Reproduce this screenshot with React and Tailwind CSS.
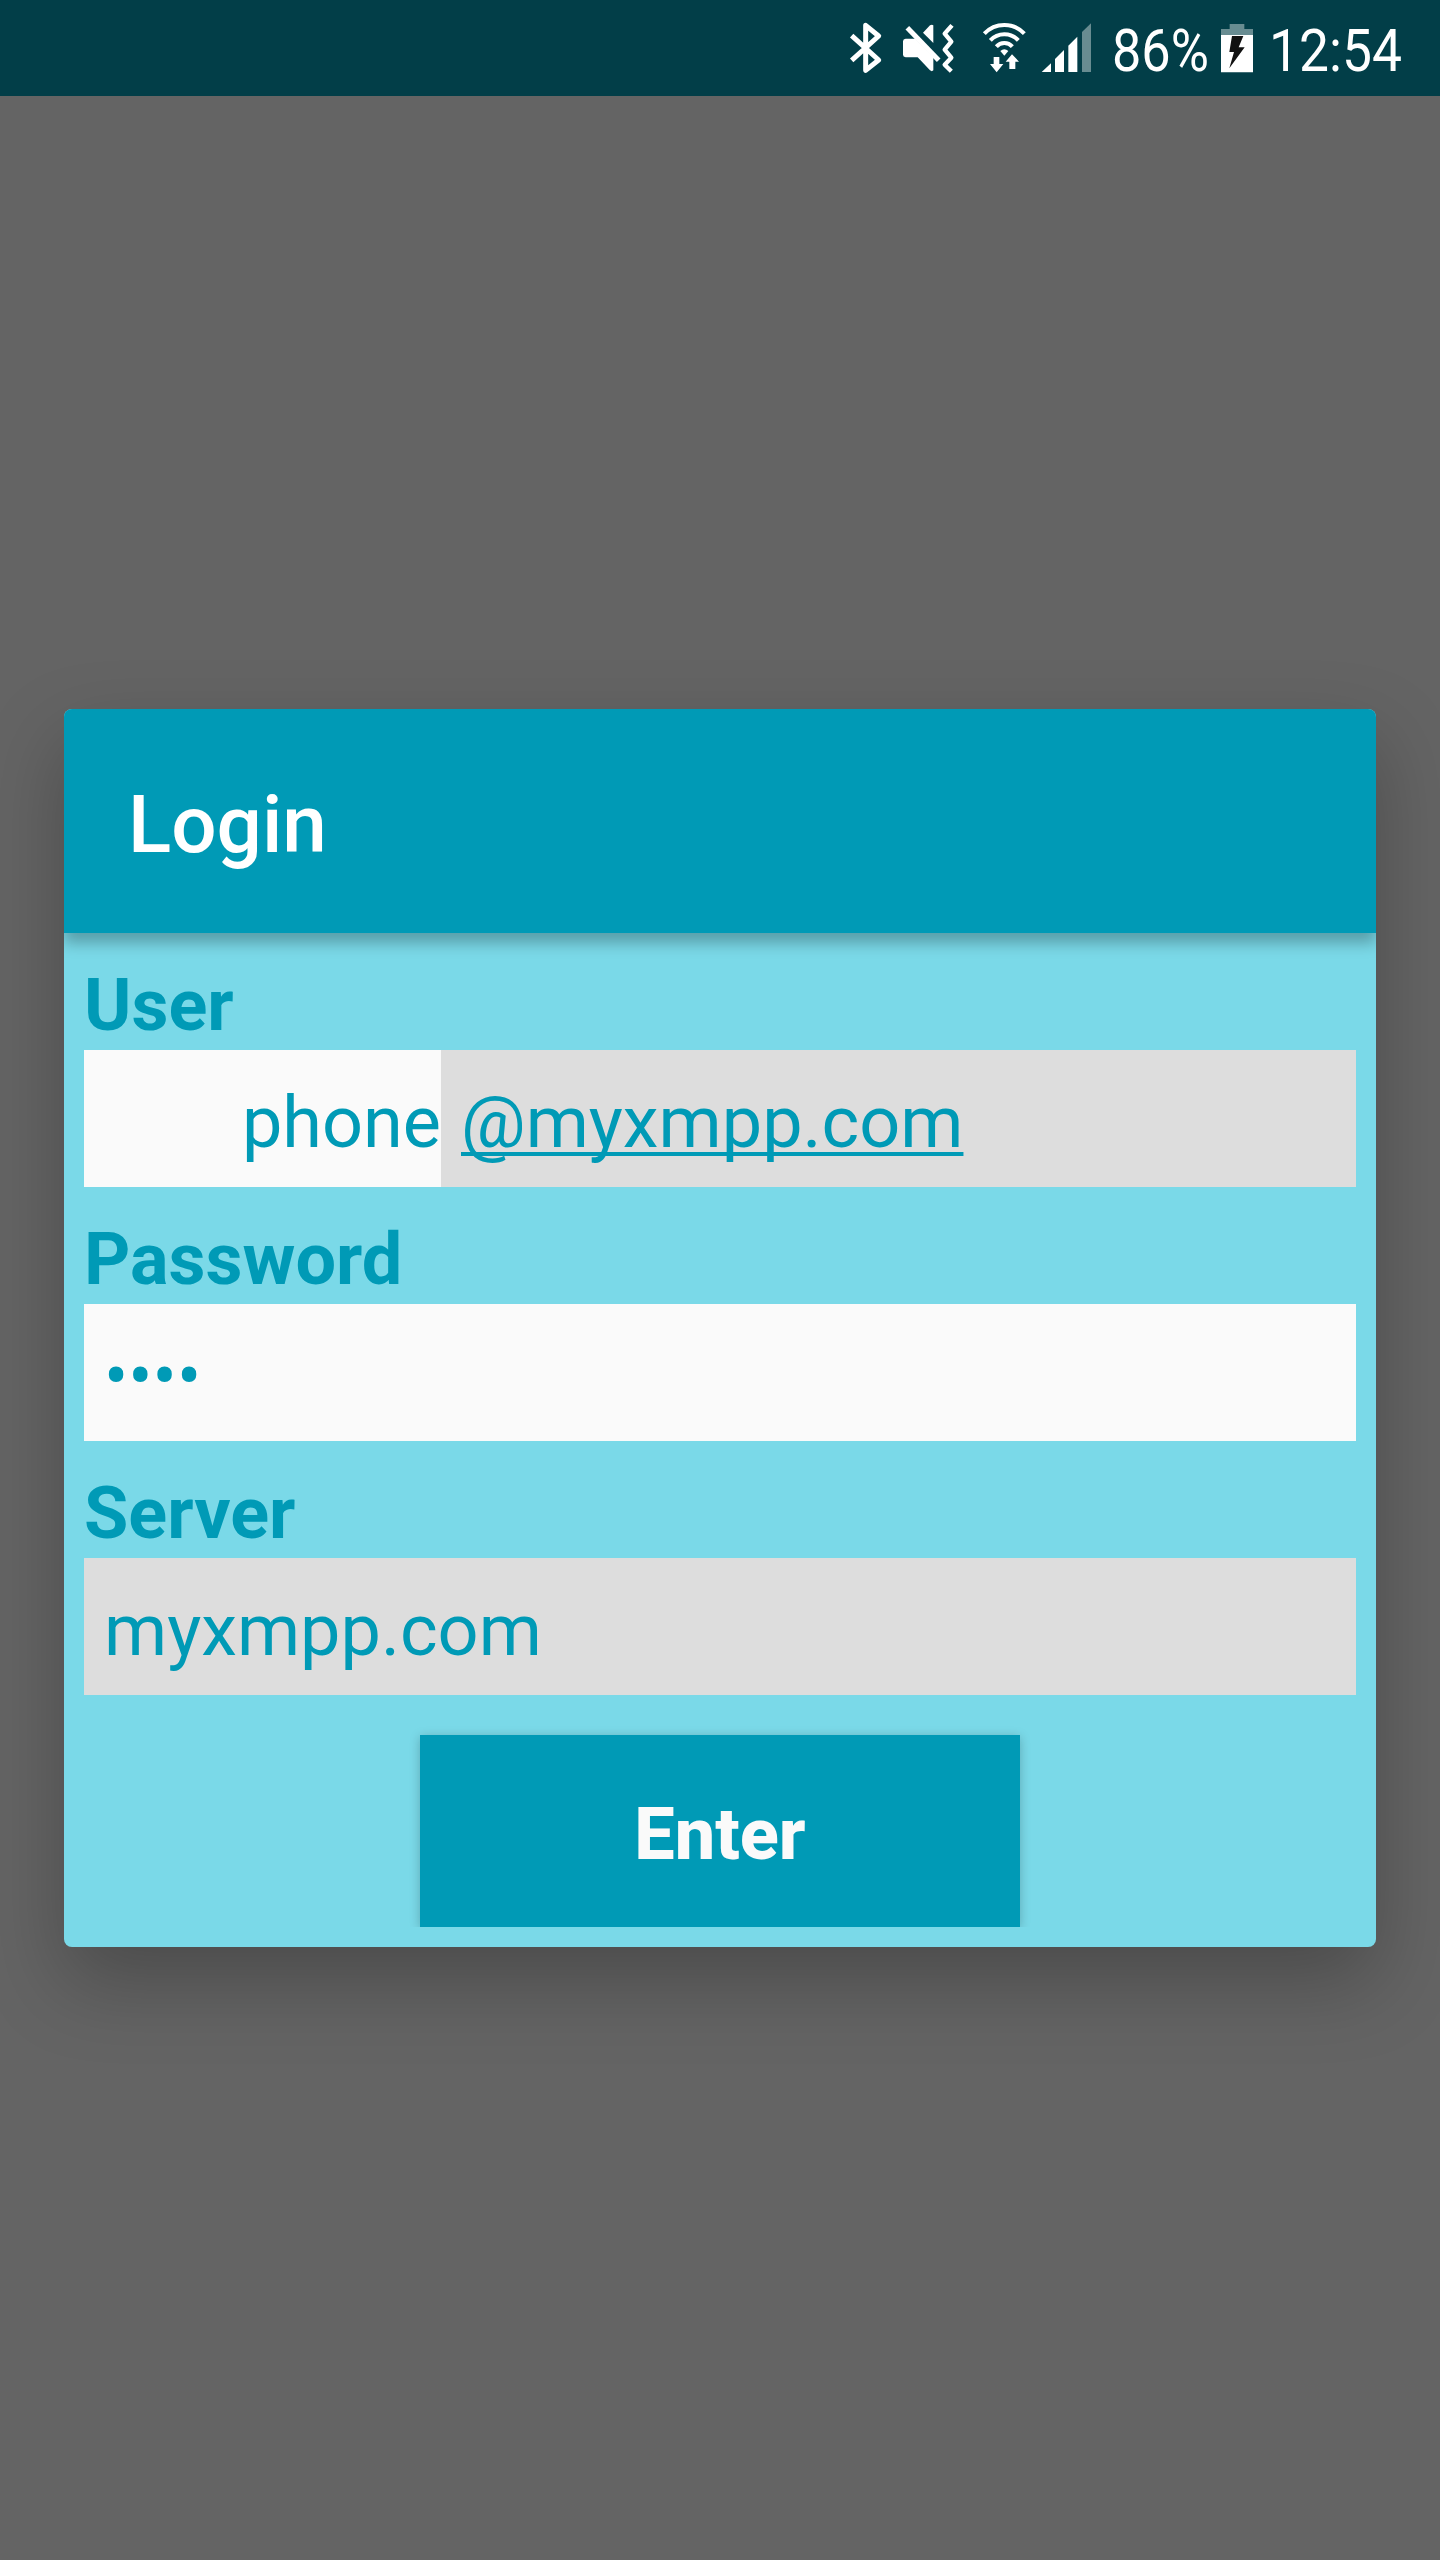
import React from "react";

function BluetoothIcon() {
  return (
    <svg className="h-[55px] w-[35px]" viewBox="54 60 105 165" fill="none" stroke="#fff" strokeWidth="15" strokeLinejoin="round">
      <path d="M65 107 L146 180 L107 211 V76 L146 108 L65 181" />
    </svg>
  );
}

function MutedIcon() {
  return (
    <svg className="ml-[19px] h-[55px] w-[53px]" viewBox="216 60 159 165" fill="#fff">
      <path d="M279 98 L300 76 Q306 72 310 76 V129 Z" />
      <path d="M227 116 H256 L310 172 V211 Q306 216 300 211 L263 172 H227 Q219 171 219 164 V124 Q219 117 227 116 Z" />
      <path d="M232 83 L326 181" stroke="#fff" strokeWidth="15" />
      <path d="M366 76 L344 101 L364 125 L344 149 L364 173 L344 194 L364 214" fill="none" stroke="#fff" strokeWidth="13" strokeLinejoin="round" />
    </svg>
  );
}

function WifiIcon() {
  return (
    <svg className="ml-[27px] h-[55px] w-[45px]" viewBox="456 60 135 165" fill="#fff">
      <g fill="none" stroke="#fff" strokeWidth="12">
        <path d="M463 101 A82 82 0 0 1 583 101" />
        <path d="M481 121 A57 57 0 0 1 565 121" />
        <path d="M499 140 A32 32 0 0 1 547 140" />
      </g>
      <path d="M511 153 Q523 142 535 153 L523 167 Z" />
      <path d="M491 171 H508 V192 H520 L500 217 L480 192 H491 Z" />
      <path d="M538 207 H556 V185 H567 L546 163 L527 185 H538 Z" />
    </svg>
  );
}

function SignalIcon() {
  return (
    <svg className="ml-[14px] h-[55px] w-[51px]" viewBox="633 60 153 165" fill="#fff">
      <path d="M635 216 L663 190 V216 Z" />
      <path d="M675 216 V177 L702 150 V216 Z" />
      <path d="M715 216 V137 L742 110 V216 Z" />
      <path d="M756 216 V96 L783 70 V216 Z" fill="#688c91" />
    </svg>
  );
}

function BatteryIcon() {
  return (
    <svg className="ml-[10px] h-[55px] w-[34px]" viewBox="360 60 102 165">
      <path d="M389 72 H433 V87 H459 V105 H363 V87 H389 Z" fill="#688c91" />
      <path d="M363 105 H459 V217 H363 Z" fill="#fff" />
      <path d="M396 108 H430 L416 142 H434 L388 205 L402 156 H388 Z" fill="#111" />
    </svg>
  );
}

function StatusBar() {
  return (
    <div className="flex h-24 items-start bg-[#023e48] pl-[848px] pt-5 text-[60px] leading-[70px] text-white">
      <BluetoothIcon />
      <MutedIcon />
      <WifiIcon />
      <SignalIcon />
      <div className="-mt-1 ml-5 w-[98px] whitespace-nowrap">
        <span className="inline-block origin-left scale-x-[0.87]">86%</span>
      </div>
      <BatteryIcon />
      <div className="-mt-1 ml-[15px] w-[140px] whitespace-nowrap">
        <span className="inline-block origin-left scale-x-[0.89]">12:54</span>
      </div>
    </div>
  );
}

function Field({ label, children }) {
  return (
    <div className="pt-[31px]">
      <div className="mb-[2px] h-[84px] font-bold">{label}</div>
      <div className="flex h-[137px]">{children}</div>
    </div>
  );
}

export default function App() {
  return (
    <div className="flex h-[2560px] w-[1440px] flex-col overflow-hidden bg-[#646464] font-['Roboto',sans-serif]">
      <StatusBar />
      <div className="mx-16 mt-[613px] h-[1238px] rounded-[8px] shadow-[0_34px_80px_rgba(0,0,0,0.25)]">
        <div className="h-full overflow-hidden rounded-[8px] bg-[#7ad9e8]">
          <div className="relative z-10 h-[224px] bg-[#009ab6] pl-16 pt-[69px] text-[80px] font-medium leading-[94px] text-white shadow-[0_10px_14px_rgba(0,0,0,0.27)]">
            Login
          </div>
          <div className="px-5 text-[72px] leading-[84px] text-[#009ab6]">
            <Field label="User">
              <div className="w-[357px] bg-[#fafafa] pt-[31px] text-right">phone</div>
              <div className="flex-1 bg-[#dddddd] pl-5 pt-[31px]">
                <span className="underline decoration-[4px] underline-offset-[5px] [text-decoration-skip-ink:none]">@myxmpp.com</span>
              </div>
            </Field>
            <Field label="Password">
              <div className="flex-1 bg-[#fafafa] pl-5 pt-[31px]">••••</div>
            </Field>
            <Field label="Server">
              <div className="flex-1 bg-[#dddddd] pl-5 pt-[31px]">myxmpp.com</div>
            </Field>
            <div className="flex h-[232px] justify-center overflow-hidden pt-10">
              <button className="block h-[192px] w-[600px] bg-[#009ab6] pt-[7px] text-center font-extrabold text-[#fafafa] shadow-[0_2px_10px_rgba(0,0,0,0.22)]">
                Enter
              </button>
            </div>
          </div>
        </div>
      </div>
    </div>
  );
}
